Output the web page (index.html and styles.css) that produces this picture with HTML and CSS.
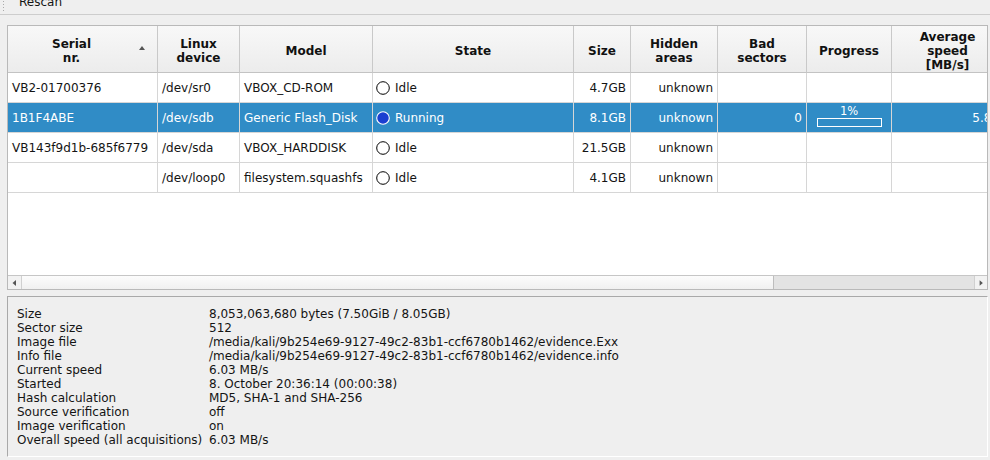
FILE: index.html
```html
<!DOCTYPE html>
<html>
<head>
<meta charset="utf-8">
<link rel="stylesheet" href="styles.css">
</head>
<body>
<div class="toolbar">
  <span class="grip"></span>
  <span class="tb-btn">Rescan</span>
</div>
<div class="frame">
  <div class="viewport">
    <div class="row head">
      <div class="c sorted">Serial<br>nr.<span class="sort-ind"></span></div>
      <div class="c">Linux<br>device</div>
      <div class="c">Model</div>
      <div class="c">State</div>
      <div class="c">Size</div>
      <div class="c">Hidden<br>areas</div>
      <div class="c">Bad<br>sectors</div>
      <div class="c">Progress</div>
      <div class="c">Average<br>speed<br>[MB/s]</div>
    </div>
    <div class="row">
      <div class="c">VB2-01700376</div>
      <div class="c">/dev/sr0</div>
      <div class="c">VBOX_CD-ROM</div>
      <div class="c state"><svg class="st" viewBox="0 0 14 14"><circle cx="7" cy="7" r="6.3" fill="#fff" stroke="#000" stroke-width="1"/></svg>Idle</div>
      <div class="c r">4.7GB</div>
      <div class="c r">unknown</div>
      <div class="c"></div>
      <div class="c"></div>
      <div class="c"></div>
    </div>
    <div class="row sel">
      <div class="c">1B1F4ABE</div>
      <div class="c">/dev/sdb</div>
      <div class="c">Generic Flash_Disk</div>
      <div class="c state"><svg class="st" viewBox="0 0 14 14"><circle cx="7" cy="7" r="6.3" fill="#1b3fd1" stroke="#fff" stroke-width="1.1"/></svg>Running</div>
      <div class="c r">8.1GB</div>
      <div class="c r">unknown</div>
      <div class="c r">0</div>
      <div class="c prog"><span class="pct">1%</span><span class="bar"></span></div>
      <div class="c r">5.83</div>
    </div>
    <div class="row">
      <div class="c">VB143f9d1b-685f6779</div>
      <div class="c">/dev/sda</div>
      <div class="c">VBOX_HARDDISK</div>
      <div class="c state"><svg class="st" viewBox="0 0 14 14"><circle cx="7" cy="7" r="6.3" fill="#fff" stroke="#000" stroke-width="1"/></svg>Idle</div>
      <div class="c r">21.5GB</div>
      <div class="c r">unknown</div>
      <div class="c"></div>
      <div class="c"></div>
      <div class="c"></div>
    </div>
    <div class="row">
      <div class="c"></div>
      <div class="c">/dev/loop0</div>
      <div class="c">filesystem.squashfs</div>
      <div class="c state"><svg class="st" viewBox="0 0 14 14"><circle cx="7" cy="7" r="6.3" fill="#fff" stroke="#000" stroke-width="1"/></svg>Idle</div>
      <div class="c r">4.1GB</div>
      <div class="c r">unknown</div>
      <div class="c"></div>
      <div class="c"></div>
      <div class="c"></div>
    </div>
  </div>
  <div class="hscroll">
    <div class="sbtn"><svg viewBox="0 0 13 13" width="13" height="13"><polygon points="8,4 8,10 4.5,7" fill="#555"/></svg></div>
    <div class="handle"></div>
    <div class="trough"></div>
    <div class="sbtn right"><svg viewBox="0 0 13 13" width="13" height="13"><polygon points="5,4 5,10 8.5,7" fill="#555"/></svg></div>
  </div>
</div>
<div class="info">
  <div class="k">Size</div><div class="v">8,053,063,680 bytes (7.50GiB / 8.05GB)</div>
  <div class="k">Sector size</div><div class="v">512</div>
  <div class="k">Image file</div><div class="v">/media/kali/9b254e69-9127-49c2-83b1-ccf6780b1462/evidence.Exx</div>
  <div class="k">Info file</div><div class="v">/media/kali/9b254e69-9127-49c2-83b1-ccf6780b1462/evidence.info</div>
  <div class="k">Current speed</div><div class="v">6.03 MB/s</div>
  <div class="k">Started</div><div class="v">8. October 20:36:14 (00:00:38)</div>
  <div class="k">Hash calculation</div><div class="v">MD5, SHA-1 and SHA-256</div>
  <div class="k">Source verification</div><div class="v">off</div>
  <div class="k">Image verification</div><div class="v">on</div>
  <div class="k">Overall speed (all acquisitions)</div><div class="v">6.03 MB/s</div>
</div>
</body>
</html>
```
FILE: styles.css
```css
* { box-sizing: border-box; }
html, body { margin: 0; padding: 0; }
body {
  background: #efefef;
  font-family: "DejaVu Sans", sans-serif;
  font-size: 12px;
  color: #141414;
  width: 990px;
  height: 460px;
  overflow: hidden;
}
.toolbar {
  height: 15px;
  border-bottom: 1px solid #cdcdcd;
  display: flex;
  align-items: flex-start;
  overflow: hidden;
}
.grip {
  width: 3px;
  height: 12px;
  margin-left: 2px;
  background-image: radial-gradient(circle, #aaa 0.6px, transparent 0.9px);
  background-size: 3px 3px;
}
.tb-btn {
  margin-left: 14px;
  line-height: 14px;
  margin-top: -5px;
}
.frame {
  margin: 10px 0 0 7px;
  width: 981px;
  height: 265px;
  border: 1px solid #b9b9b9;
  display: flex;
  flex-direction: column;
  background: #fff;
}
.viewport {
  height: 249px;
  overflow: hidden;
  background: #fff;
}
.row {
  display: grid;
  grid-template-columns: 150px 82px 133px 201px 57px 87px 89px 85px 112px;
  width: 996px;
  height: 30px;
}
.c {
  display: flex;
  align-items: center;
  padding: 0 4px;
  border-right: 1px solid #d6d6d6;
  border-bottom: 1px solid #d6d6d6;
  white-space: nowrap;
  overflow: hidden;
}
.c.r { justify-content: flex-end; }
.head { height: 47px; }
.head .c {
  position: relative;
  justify-content: center;
  text-align: center;
  font-weight: bold;
  line-height: 14px;
  padding-top: 3px;
  color: #111;
  background: linear-gradient(#f8f8f8, #ececec);
  border-right-color: #c9c9c9;
  border-bottom-color: #c3c3c3;
}
.head .c.sorted { padding-right: 26px; }
.sort-ind {
  position: absolute;
  right: 12px;
  top: 20px;
  width: 0;
  height: 0;
  border-left: 3px solid transparent;
  border-right: 3px solid transparent;
  border-bottom: 4px solid #555;
}
.sel .c {
  background: #308cc6;
  color: #fff;
  border-right-color: #d6d6d6;
}
.state { padding-left: 3px; }
.st { width: 14px; height: 14px; margin-right: 5px; flex: none; }
.prog {
  flex-direction: column;
  justify-content: center;
  align-items: center;
}
.pct { line-height: 12px; font-size: 11.5px; margin-top: -3px; }
.bar {
  width: 65px;
  height: 9px;
  border: 1px solid #fff;
  margin-top: 1px;
}
.hscroll {
  height: 14px;
  border-top: 1px solid #c6c6c6;
  display: flex;
  background: #e3e3e3;
}
.sbtn {
  width: 14px;
  flex: none;
  display: flex;
  align-items: center;
  justify-content: center;
  background: #f2f2f2;
  border-right: 1px solid #d0d0d0;
}
.sbtn.right { border-right: none; border-left: 1px solid #d0d0d0; width: 13px; }
.handle {
  width: 752px;
  flex: none;
  background: linear-gradient(#fcfcfc, #f0f0f0);
  border-right: 1px solid #bdbdbd;
}
.trough { flex: 1; background: #e3e3e3; }
.info {
  margin: 6px 0 0 7px;
  width: 981px;
  height: 161px;
  border-top: 1px solid #a9a9a9;
  border-left: 1px solid #a9a9a9;
  border-bottom: 1px solid #fff;
  border-right: 1px solid #fff;
  padding: 10px 0 0 9px;
  display: grid;
  grid-template-columns: 192px 1fr;
  grid-auto-rows: 14px;
  line-height: 14px;
  align-content: start;
}
```
